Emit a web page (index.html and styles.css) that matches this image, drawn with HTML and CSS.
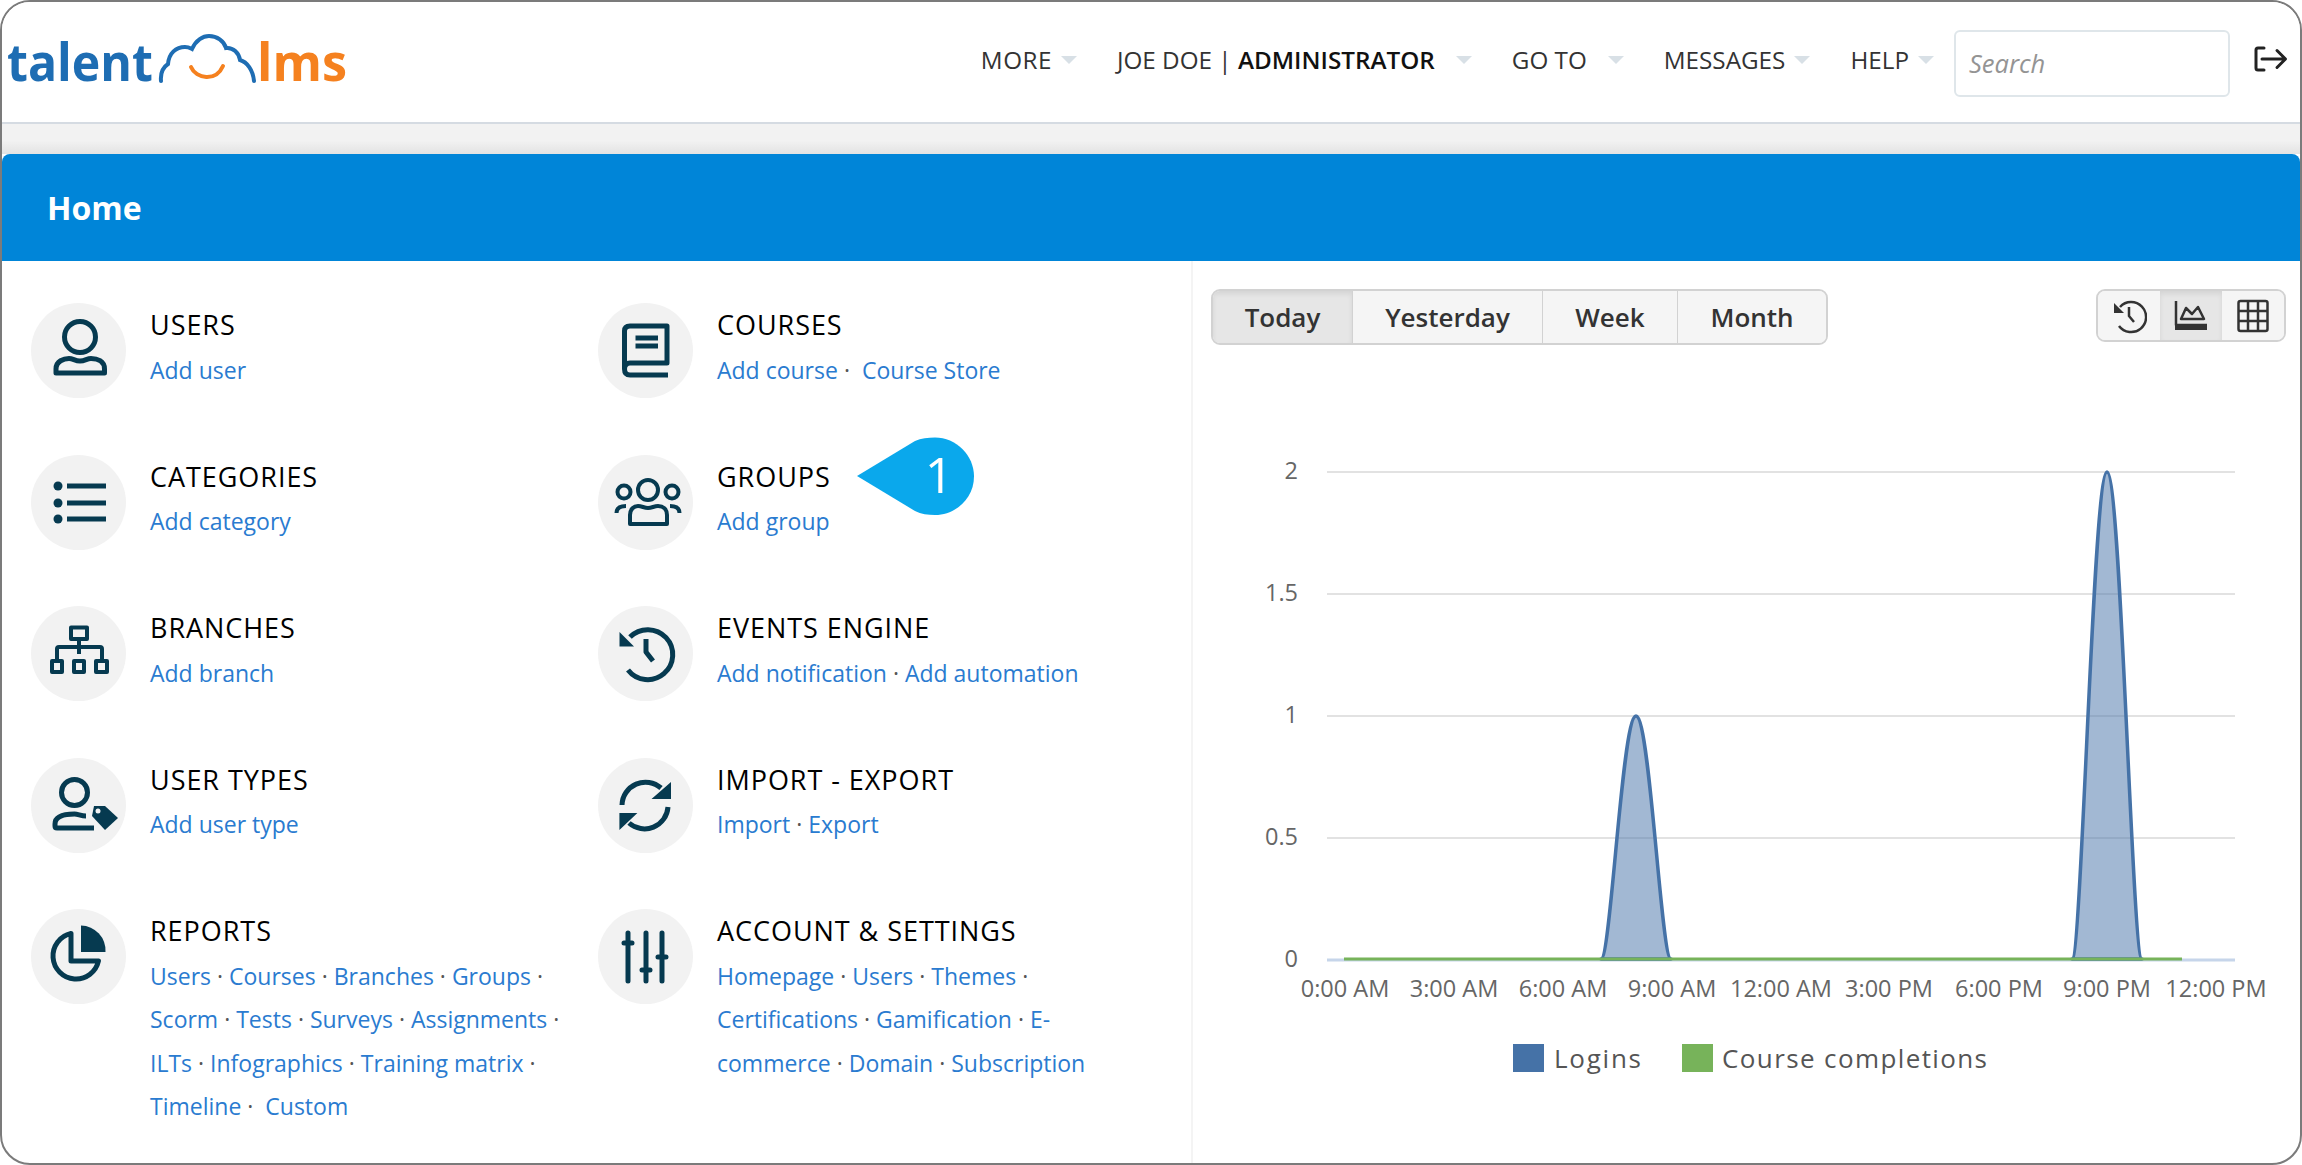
FILE: index.html
```html
<!DOCTYPE html>
<html lang="en">
<head>
<meta charset="utf-8">
<title>Home</title>
<link rel="stylesheet" href="styles.css">
</head>
<body>
<div class="frame">
  <header class="header">
    <svg class="logo" viewBox="0 0 350 122" width="350" height="122" aria-label="talentlms">
      <text class="logo-talent" x="7" y="81" textLength="146" lengthAdjust="spacingAndGlyphs">talent</text>
      <path class="logo-cloud" d="M161 81 C160 70 165 66 168 64 C169 53 176 47 185 47 C189 47 190 48 192 49 C196 40 203 36 209 36 C217 36 224 41 226 48 C233 47 239 53 240 60 C247 62 253 70 254 81"/>
      <path class="logo-smile" d="M191 67 C196 79 216 82 223 66"/>
      <text class="logo-lms" x="257" y="81" textLength="90" lengthAdjust="spacingAndGlyphs">lms</text>
    </svg>
    <nav class="nav">
      <div class="nav-item nav-more">MORE<i class="caret caret-near"></i></div>
      <div class="nav-item">JOE DOE | <b class="nav-role">ADMINISTRATOR</b><i class="caret caret-far"></i></div>
      <div class="nav-item">GO TO<i class="caret caret-far"></i></div>
      <div class="nav-item">MESSAGES<i class="caret caret-near"></i></div>
      <div class="nav-item">HELP<i class="caret caret-near"></i></div>
    </nav>
    <div class="search"><span>Search</span></div>
    <svg class="logout" viewBox="0 0 34 26" width="34" height="26" aria-label="Log out">
      <path d="M10 2 H4 Q2 2 2 4 V22 Q2 24 4 24 H10"/>
      <path d="M8 13 H31 M23 4.5 L31.5 13 L23 21.5"/>
    </svg>
  </header>
  <div class="strip"></div>
  <div class="title-bar"><h1>Home</h1></div>
  <main class="main">
    <section class="menu">
      <article class="entry">
        <div class="badge">
          <svg class="glyph" viewBox="0 0 95 95"><circle cx="49" cy="34" r="15.5"/><path d="M25 70 V66 C25 58 33 55.5 38 55.5 C42 55.5 44 58 49 58 C54 58 56 55.5 60 55.5 C66 55.5 73.5 58 73.5 66 V70 Z"/></svg>
        </div>
        <div class="body"><h2>USERS</h2><p><a>Add user</a></p></div>
      </article>
      <article class="entry">
        <div class="badge">
          <svg class="glyph" viewBox="0 0 95 95"><path d="M26.5 66 V28 Q26.5 23 32 23 H69 V60 H32 Q26.5 60 26.5 66 Q26.500 72 32 72 H70 M37.5 35 H60 M37.5 43 H60"/></svg>
        </div>
        <div class="body"><h2>COURSES</h2><p><a>Add course</a> <span>·</span>&nbsp; <a>Course Store</a></p></div>
      </article>
      <article class="entry">
        <div class="badge">
          <svg class="glyph" viewBox="0 0 95 95"><circle class="solid" cx="27" cy="31" r="4.5"/><circle class="solid" cx="27" cy="48" r="4.5"/><circle class="solid" cx="27" cy="64" r="4.5"/><path d="M36 31 H75 M36 48 H75 M36 64 H75"/></svg>
        </div>
        <div class="body"><h2>CATEGORIES</h2><p><a>Add category</a></p></div>
      </article>
      <article class="entry">
        <div class="badge">
          <svg class="glyph" viewBox="0 0 95 95"><circle class="thin" cx="50" cy="35" r="10"/><circle class="thin" cx="26" cy="37" r="6.5"/><circle class="thin" cx="74" cy="37" r="6.5"/><path class="thin" d="M32 69 V60 C32 54 36 51 40 51 C44 51 46 53 50 53 C54 53 56 51 60 51 C65 51 69 54 69 60 V69 Z M18.5 58 C18.5 53 22 51 28 51 M81.5 58 C81.5 53 78 51 72 51"/></svg>
        </div>
        <div class="body"><h2>GROUPS</h2><p><a>Add group</a></p></div>
      </article>
      <article class="entry">
        <div class="badge">
          <svg class="glyph" viewBox="0 0 95 95"><path class="thin" d="M40 21.5 H56 V33 H40 Z M48 33 V48 M26 55 V43 Q26 41 28 41 H69 Q71 41 71 43 V55 M21 55 H31 V66 H21 Z M43 55 H53 V66 H43 Z M65 55 H76 V66 H65 Z"/></svg>
        </div>
        <div class="body"><h2>BRANCHES</h2><p><a>Add branch</a></p></div>
      </article>
      <article class="entry">
        <div class="badge">
          <svg class="glyph" viewBox="0 0 95 95"><path d="M32 31 A 25 25 0 1 1 30 64 M48 33 V46 L55 55"/><path class="solid" d="M21.5 26 V40.5 H36 Z"/></svg>
        </div>
        <div class="body"><h2>EVENTS ENGINE</h2><p><a>Add notification</a> <span>·</span> <a>Add automation</a></p></div>
      </article>
      <article class="entry">
        <div class="badge">
          <svg class="glyph" viewBox="0 0 95 95"><circle cx="43.5" cy="34.5" r="13"/><path d="M55 58 C50 58 47 56 43.5 56 C38 56 24 56 24 66 V68 Q24 70 26 70 H63"/><path class="solid" d="M63 48 H74 L87 60 L74 72 L61 58 Z"/><circle class="hole" cx="67" cy="53" r="2.5"/></svg>
        </div>
        <div class="body"><h2>USER TYPES</h2><p><a>Add user type</a></p></div>
      </article>
      <article class="entry">
        <div class="badge">
          <svg class="glyph" viewBox="0 0 95 95"><path d="M24 47 A 23.5 23.5 0 0 1 63 30 M70 49 A 23.5 23.5 0 0 1 31 65"/><path class="solid" d="M73 24 V41 H53.5 Z M21.4 72 V55 H39.4 Z"/></svg>
        </div>
        <div class="body"><h2>IMPORT - EXPORT</h2><p><a>Import</a> <span>·</span> <a>Export</a></p></div>
      </article>
      <article class="entry">
        <div class="badge">
          <svg class="glyph" viewBox="0 0 95 95"><path d="M40 24.550 A 23 23 0 1 0 67.450 52 H40 Z"/><path class="solid" d="M50 16.5 A 25 25 0 0 1 74.5 43 H50 Z"/></svg>
        </div>
        <div class="body"><h2>REPORTS</h2><p><a>Users</a> <span>·</span> <a>Courses</a> <span>·</span> <a>Branches</a> <span>·</span> <a>Groups</a> <span>·</span> <a>Scorm</a> <span>·</span> <a>Tests</a> <span>·</span> <a>Surveys</a> <span>·</span> <a>Assignments</a> <span>·</span> <a>ILTs</a> <span>·</span> <a>Infographics</a> <span>·</span> <a>Training matrix</a> <span>·</span> <a>Timeline</a> <span>·</span>&nbsp; <a>Custom</a></p></div>
      </article>
      <article class="entry">
        <div class="badge">
          <svg class="glyph" viewBox="0 0 95 95"><path class="round" d="M30 24 V72 M48 24 V72 M64 24 V72"/><path class="round" d="M26 34 H34 M44 61 H52 M60 48 H68"/></svg>
        </div>
        <div class="body"><h2>ACCOUNT &amp; SETTINGS</h2><p><a>Homepage</a> <span>·</span> <a>Users</a> <span>·</span> <a>Themes</a> <span>·</span> <a>Certifications</a> <span>·</span> <a>Gamification</a> <span>·</span> <a>E-</a><a>commerce</a> <span>·</span> <a>Domain</a> <span>·</span> <a>Subscription</a></p></div>
      </article>
    </section>
    <section class="panel">
      <div class="toolbar">
        <div class="btn-group">
          <button class="btn btn-on">Today</button><button class="btn btn-y">Yesterday</button><button class="btn btn-w">Week</button><button class="btn btn-m">Month</button>
        </div>
        <div class="icon-group">
          <button class="ibtn"><svg viewBox="0 0 36 36" width="36" height="36"><path d="M9 9 A 15 15 0 1 1 8 28 M18 9 V18 L23 24"/><path class="fill" d="M3 5 V15 H13 Z"/></svg></button>
          <button class="ibtn ibtn-on"><svg viewBox="0 0 36 36" width="36" height="36"><path d="M3 3 V27 H34 M8 21 L13 10 L19 16 L25 9 L31 21 Z"/><path class="bold" d="M2 30 H34"/></svg></button>
          <button class="ibtn"><svg viewBox="0 0 36 36" width="36" height="36"><path d="M3.5 5 Q3.5 3 5.500 3 H30.500 Q32.500 3 32.500 5 V31 Q32.500 33 30.500 33 H5.500 Q3.500 33 3.500 31 Z M3.500 13 H32.500 M3.500 23 H32.500 M13 3 V33 M23 3 V33"/></svg></button>
        </div>
      </div>
      <svg class="chart" viewBox="1192 345 1108 818" width="1108" height="818">
        <g class="grid"><path d="M1326 472 H2234 M1326 594 H2234 M1326 716 H2234 M1326 838 H2234"/></g>
        <path class="axis" d="M1326 960 H2234"/>
        <path class="area" d="M1600 959 C1610 959 1621 716 1635 716 C1649 716 1660 959 1670 959 Z"/>
        <path class="area" d="M2071 959 C2081 959 2092 472 2106 472 C2120 472 2131 959 2141 959 Z"/>
        <path class="green" d="M1343 959 H2181"/>
        <g class="yaxis">
          <text x="1297" y="479">2</text><text x="1297" y="601">1.5</text><text x="1297" y="723">1</text><text x="1297" y="845">0.5</text><text x="1297" y="967">0</text>
        </g>
        <g class="xaxis">
          <text x="1344" y="997">0:00 AM</text><text x="1453" y="997">3:00 AM</text><text x="1562" y="997">6:00 AM</text><text x="1671" y="997">9:00 AM</text><text x="1780" y="997">12:00 AM</text><text x="1888" y="997">3:00 PM</text><text x="1998" y="997">6:00 PM</text><text x="2106" y="997">9:00 PM</text><text x="2215" y="997">12:00 PM</text>
        </g>
        <rect class="key-blue" x="1512" y="1044" width="31" height="28"/>
        <text class="legend" x="1553" y="1068" textLength="87">Logins</text>
        <rect class="key-green" x="1681" y="1044" width="31" height="28"/>
        <text class="legend" x="1721" y="1068" textLength="265">Course completions</text>
      </svg>
    </section>
  </main>
  <svg class="callout" viewBox="0 0 120 80" width="120" height="80">
    <path d="M1 39 L59 4 C65 1 72 0.500 79 0.500 C100 0.500 118 18 118 39.500 C118 61 100 78 79 78 C72 78 65 77 59 74 Z"/>
    <text x="83" y="56">1</text>
  </svg>
</div>
</body>
</html>
```

FILE: styles.css
```css
* { box-sizing: border-box; }
html, body { margin: 0; padding: 0; background: #fff; }
body { width: 2302px; height: 1165px; overflow: hidden; font-family: "Open Sans", "Noto Sans", sans-serif; }

.frame { position: relative; width: 2302px; height: 1165px; border: 2px solid #7b7b7b; border-radius: 30px; overflow: hidden; background: #fff; display: flex; flex-direction: column; }

.header { height: 122px; flex: none; display: flex; align-items: center; padding-right: 12px; background: #fff; border-bottom: 2px solid #d5dbe2; }
.logo { flex: none; margin-left: -2px; margin-top: -2px; }
.logo-talent, .logo-lms { font-family: "Open Sans", sans-serif; font-weight: 700; font-size: 52px; }
.logo-talent { fill: #1e6db3; }
.logo-lms { fill: #f5811f; }
.logo-cloud { fill: none; stroke: #1e6db3; stroke-width: 4; stroke-linecap: round; }
.logo-smile { fill: none; stroke: #f5811f; stroke-width: 4; stroke-linecap: round; }

.nav { margin-left: auto; display: flex; align-items: center; gap: 40px; margin-top: -6px; font-size: 24.250px; color: #333; }
.nav-item { display: flex; align-items: center; white-space: pre; }
.nav-more { letter-spacing: 0.5px; }
.nav-role { font-weight: 600; color: #111; }
.caret { flex: none; width: 0; height: 0; border-left: 8px solid transparent; border-right: 8px solid transparent; border-top: 8px solid #d8e0e6; margin-top: 2px; }
.caret-near { margin-left: 9px; }
.caret-far { margin-left: 21px; }

.search { flex: none; width: 276px; height: 67px; margin-left: 20px; margin-top: 2px; padding-left: 13px; display: flex; align-items: center; border: 2px solid #dfe6ea; border-radius: 6px; font-size: 25.500px; font-style: italic; color: #949494; background: #fff; }
.logout { flex: none; margin-left: 24px; margin-top: -6px; fill: none; stroke: #222; stroke-width: 3; stroke-linecap: round; stroke-linejoin: round; }

.strip { height: 30px; flex: none; background: linear-gradient(#f2f2f2 55%, #e3e3e3); }
.title-bar { height: 107px; flex: none; display: flex; align-items: center; padding-left: 45px; background: #0085d8; border-radius: 8px 8px 0 0; }
.title-bar h1 { margin: 0; font-size: 32px; font-weight: 700; color: #fff; }

.main { flex: 1; min-height: 0; display: flex; }
.menu { width: 1189px; flex: none; padding: 42px 0 0 29px; display: grid; grid-template-columns: 567px 567px; grid-auto-rows: 151.5px; align-content: start; }
.entry { display: flex; align-items: flex-start; min-width: 0; height: 151.5px; overflow: visible; }
.badge { flex: none; width: 95px; height: 95px; border-radius: 50%; background: #f2f2f2; }
.glyph { display: block; width: 95px; height: 95px; fill: none; stroke: #063a50; stroke-width: 5; stroke-linejoin: round; }
.glyph .thin { stroke-width: 4; }
.glyph .solid { fill: #063a50; stroke: none; }
.glyph .hole { fill: #f2f2f2; stroke: none; }
.glyph .round { stroke-linecap: round; }
.body { flex: none; width: 420px; margin-left: 24px; padding-top: 4px; }
.body h2 { margin: 0; font-size: 27px; line-height: 36px; font-weight: 500; color: #000; letter-spacing: 0.95px; }
.body p { margin: 5.500px 0 0; font-size: 23px; line-height: 43.500px; color: #555; }
.body a { color: #2a7bd0; }

.panel { flex: 1; min-width: 0; position: relative; border-left: 2px solid #f4f4f4; }
.toolbar { display: flex; justify-content: space-between; align-items: flex-start; height: 84px; padding: 28px 14px 0 18px; }
.btn-group, .icon-group { display: flex; border: 2px solid #d2d2d2; border-radius: 9px; overflow: hidden; background: #f5f5f5; }
.btn { height: 52px; border: 0; padding: 0; font: 600 26px "Open Sans", sans-serif; color: #333; background: #f5f5f5; border-right: 1px solid #d2d2d2; }
.btn-on { width: 140px; background: #e6e6e6; box-shadow: inset 0 3px 5px rgba(0,0,0,.08); }
.btn-y { width: 190px; }
.btn-w { width: 135px; }
.btn-m { width: 148px; border-right: 0; }
.ibtn { width: 62px; height: 49px; padding: 0; border: 0; background: #f5f5f5; display: flex; align-items: center; justify-content: center; }
.ibtn-on { background: #e6e6e6; box-shadow: inset 0 3px 5px rgba(0,0,0,.08); }
.ibtn svg { fill: none; stroke: #333; stroke-width: 2.500; stroke-linejoin: round; }
.ibtn .fill { fill: #333; stroke: none; }
.ibtn .bold { stroke-width: 4; }

.chart { position: absolute; left: 0; top: 84px; display: block; }
.grid path { fill: none; stroke: #e2e2e2; stroke-width: 2; }
.axis { fill: none; stroke: #c6d5ea; stroke-width: 3; }
.area { fill: rgba(69,114,167,.5); stroke: #4572a7; stroke-width: 3.500; stroke-linejoin: round; }
.green { fill: none; stroke: #77b35a; stroke-width: 3; }
.yaxis text { font-size: 23.500px; fill: #666; text-anchor: end; }
.xaxis text { font-size: 23.500px; fill: #666; text-anchor: middle; }
.legend { font-size: 26px; fill: #555; }
.key-blue { fill: #4572a7; }
.key-green { fill: #77b35a; }

.callout { position: absolute; left: 854px; top: 435px; }
.callout path { fill: #0aa8ec; }
.callout text { font-size: 50px; fill: #fff; text-anchor: middle; font-family: "Open Sans", sans-serif; }
```
